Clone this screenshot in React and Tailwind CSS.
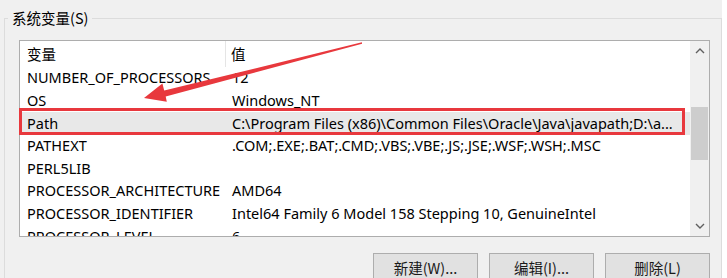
const rows = [
  ['NUMBER_OF_PROCESSORS', '12'],
  ['OS', 'Windows_NT'],
  ['Path', 'C:\\Program Files (x86)\\Common Files\\Oracle\\Java\\javapath;D:\\a...'],
  ['PATHEXT', '.COM;.EXE;.BAT;.CMD;.VBS;.VBE;.JS;.JSE;.WSF;.WSH;.MSC'],
  ['PERL5LIB', ''],
  ['PROCESSOR_ARCHITECTURE', 'AMD64'],
  ['PROCESSOR_IDENTIFIER', 'Intel64 Family 6 Model 158 Stepping 10, GenuineIntel'],
  ['PROCESSOR_LEVEL', '6'],
];

const Chevron = ({ down }) => (
  <svg width="10" height="6" viewBox="0 0 10 6">
    <path
      d={down ? 'M1 1 L5 5 L9 1' : 'M1 5 L5 1 L9 5'}
      fill="none"
      stroke="#606060"
      strokeWidth="1.4"
    />
  </svg>
);

const App = () => {
  return (
    <div className="relative w-[727px] h-[278px] overflow-hidden bg-[#f0f0f0] flex font-['Noto_Sans','Noto_Sans_CJK_SC',sans-serif] text-black">
      <div className="w-[722px] pt-[8px]">
        <fieldset className="ml-[4px] h-[320px] border border-[#dcdcdc]">
          <legend className="ml-[3px] px-[4px] text-[14.5px] leading-[20px] font-['Noto_Sans_CJK_SC',sans-serif]">
            系统变量(S)
          </legend>

          {/* list view */}
          <div className="mt-[12px] ml-[14px] w-[691px] h-[197px] border border-[#adadad] bg-white flex">
            <div className="flex-1 overflow-hidden">
              <div className="h-[26px] flex text-[14.5px] font-['Noto_Sans_CJK_SC',sans-serif]">
                <div className="w-[206px] pl-[7px] flex items-center border-r border-[#e5e5e5]">变量</div>
                <div className="pl-[5px] flex items-center">值</div>
              </div>
              {rows.map(([name, value]) => (
                <div
                  key={name}
                  className={`h-[22.6px] flex items-center text-[14.5px] whitespace-nowrap ${name === 'Path' ? 'bg-[#e8e8e8]' : ''}`}
                >
                  <div className="w-[206px] pl-[7px] overflow-hidden">{name}</div>
                  <div className="pl-[6px]">{value}</div>
                </div>
              ))}
            </div>

            {/* scrollbar */}
            <div className="w-[19px] bg-[#f0f0f0] flex flex-col">
              <div className="h-[20px] flex items-center justify-center">
                <Chevron />
              </div>
              <div className="flex-1">
                <div className="mt-[46px] mx-[1px] h-[53px] bg-[#cdcdcd]" />
              </div>
              <div className="h-[21px] flex items-center justify-center">
                <Chevron down />
              </div>
            </div>
          </div>

          {/* buttons */}
          <div className="ml-[14px] w-[691px] mt-[16px] flex justify-end gap-[11px] text-[14.5px] text-[#1a1a1a] font-['Noto_Sans_CJK_SC',sans-serif]">
            <button className="w-[105px] h-[30px] bg-[#e1e1e1] border border-[#adadad]">新建(W)...</button>
            <button className="w-[105px] h-[30px] bg-[#e1e1e1] border border-[#adadad]">编辑(I)...</button>
            <button className="w-[105px] h-[30px] bg-[#e1e1e1] border border-[#adadad]">删除(L)</button>
          </div>
        </fieldset>
      </div>
      <div className="flex-1 bg-white" />

      {/* annotation: red box + arrow */}
      <svg className="absolute inset-0 pointer-events-none" width="727" height="278" viewBox="0 0 727 278">
        <rect x="20.5" y="109.5" width="663" height="24" fill="none" stroke="#e8383d" strokeWidth="3" />
        <polygon
          points="361.9,42.3 164.2,90.6 162.4,83.4 144,98 166.8,101.8 165.7,96.4 362.1,43.7"
          fill="#e8383d"
        />
      </svg>
    </div>
  );
};

export default App;
